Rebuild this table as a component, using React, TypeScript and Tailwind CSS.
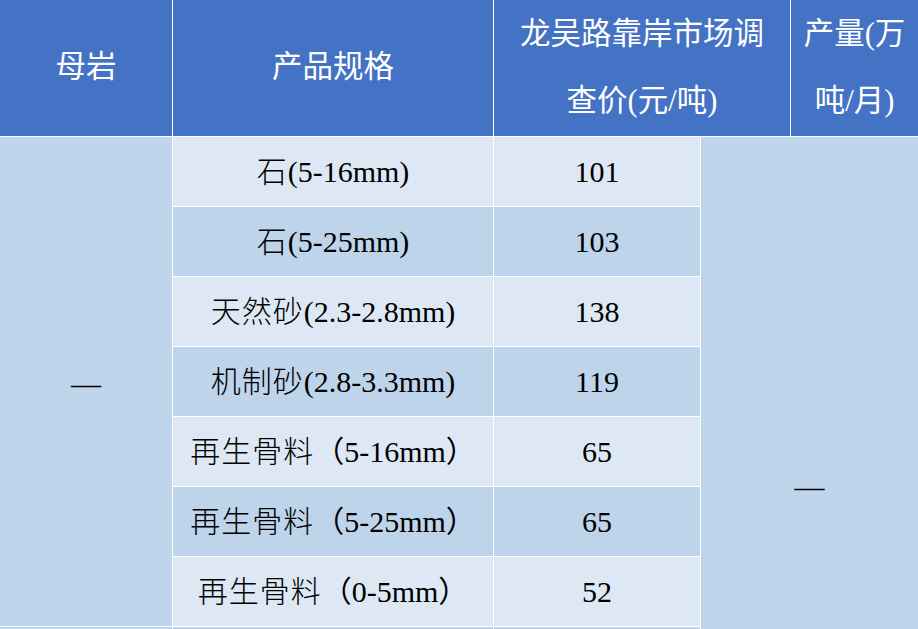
import React from 'react';

const rows = [
  { spec: '石(5-16mm)', price: '101' },
  { spec: '石(5-25mm)', price: '103' },
  { spec: '天然砂(2.3-2.8mm)', price: '138' },
  { spec: '机制砂(2.8-3.3mm)', price: '119' },
  { spec: '再生骨料（5-16mm）', price: '65' },
  { spec: '再生骨料（5-25mm）', price: '65' },
  { spec: '再生骨料（0-5mm）', price: '52' },
];

const font = { fontFamily: '"Liberation Serif", "Noto Sans CJK SC", serif' };

// wrap CJK runs so they get a bit of extra tracking like the source document
function Spec({ text }: { text: string }) {
  const parts = text.split(/([\u4e00-\u9fff]+)/).filter(Boolean);
  return (
    <span>
      {parts.map((p, i) =>
        /[\u4e00-\u9fff]/.test(p) ? (
          <span key={i} className="tracking-[1px] font-light">
            {p}
          </span>
        ) : (
          <span key={i}>{p}</span>
        )
      )}
    </span>
  );
}

export default function App() {
  return (
    <div className="w-[918px] h-[629px] overflow-hidden bg-white" style={font}>
      {/* Header */}
      <div className="grid grid-cols-[172px_320px_296px_1fr] gap-px bg-white text-white text-[30.5px]">
        <div className="h-[136px] bg-[#4472c4] flex items-center justify-center">母岩</div>
        <div className="h-[136px] bg-[#4472c4] flex items-center justify-center">产品规格</div>
        <div className="h-[136px] bg-[#4472c4] flex flex-col items-center justify-center leading-[67px]">
          <span>龙吴路靠岸市场调</span>
          <span>查价(元/吨)</span>
        </div>
        <div className="h-[136px] bg-[#4472c4] flex flex-col items-center justify-center leading-[67px]">
          <span>产量(万</span>
          <span>吨/月)</span>
        </div>
      </div>

      {/* Body */}
      <div className="mt-px grid grid-cols-[172px_320px_206px_1fr] auto-rows-[69px] gap-px bg-white text-black text-[30px]">
        <div className="row-span-7 col-start-1 row-start-1 bg-[#bfd5ec] flex items-center justify-center pt-[4px]">
          —
        </div>
        {rows.map((r, i) => (
          <React.Fragment key={i}>
            <div
              className={`col-start-2 flex items-center justify-center ${
                i % 2 === 0 ? 'bg-[#dee8f4]' : 'bg-[#bdd4eb]'
              }`}
              style={{ gridRowStart: i + 1 }}
            >
              <Spec text={r.spec} />
            </div>
            <div
              className={`col-start-3 flex items-center justify-center ${
                i % 2 === 0 ? 'bg-[#dee8f4]' : 'bg-[#bdd4eb]'
              }`}
              style={{ gridRowStart: i + 1 }}
            >
              {r.price}
            </div>
          </React.Fragment>
        ))}
        <div className="col-start-4 row-start-1 row-span-10 bg-[#bfd5ec] flex items-center justify-center">
          —
        </div>
        {/* next group, cut off by the window */}
        <div className="col-start-1 row-start-8 row-span-3 bg-[#bfd5ec]" />
        <div className="col-start-2 row-start-8 bg-[#bdd4eb]" />
        <div className="col-start-3 row-start-8 bg-[#bdd4eb]" />
        <div className="col-start-2 row-start-9 bg-[#dee8f4]" />
        <div className="col-start-3 row-start-9 bg-[#dee8f4]" />
        <div className="col-start-2 row-start-10 bg-[#bdd4eb]" />
        <div className="col-start-3 row-start-10 bg-[#bdd4eb]" />
      </div>
    </div>
  );
}
